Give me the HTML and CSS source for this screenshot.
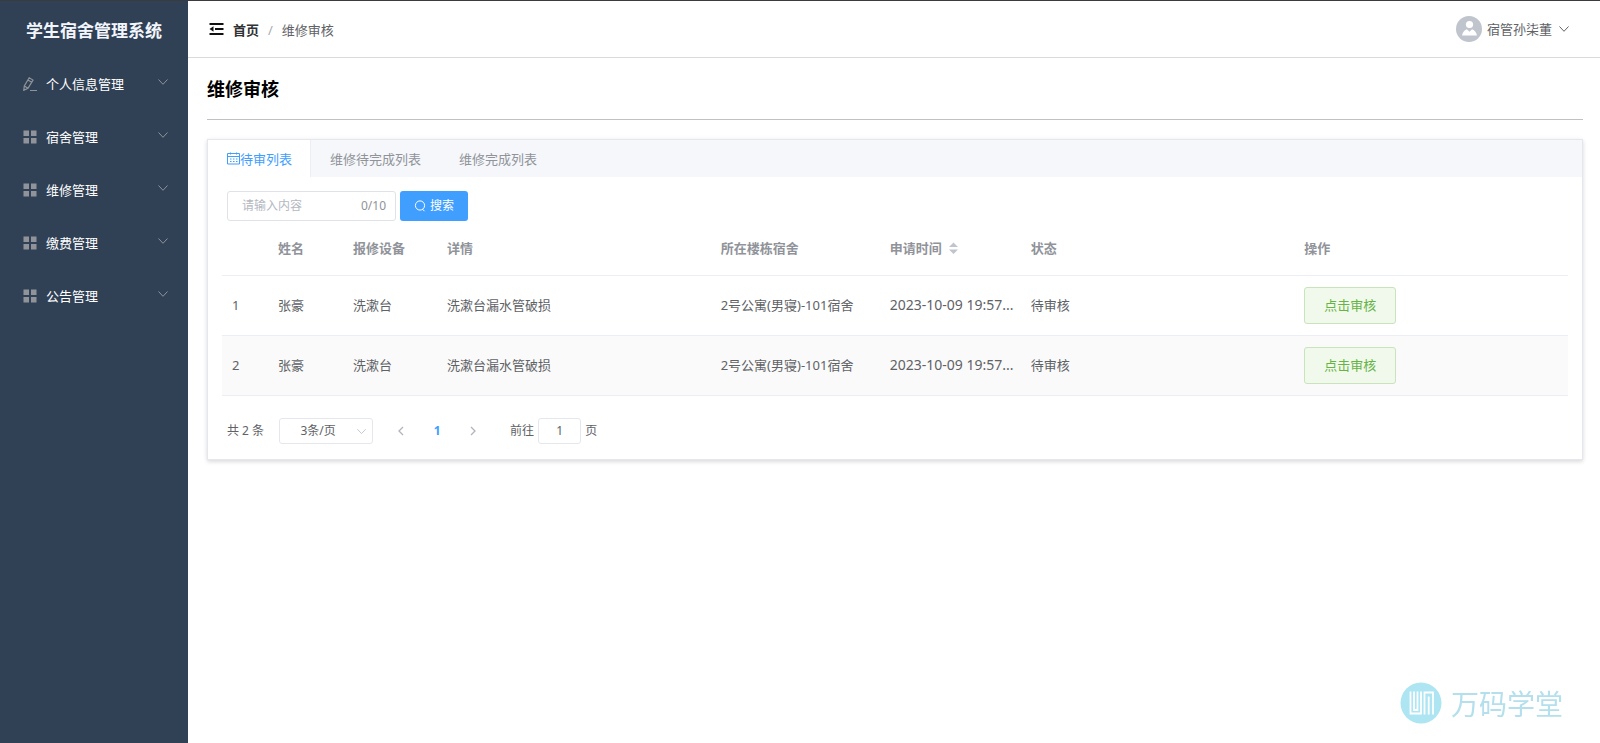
FILE: index.html
```html
<!DOCTYPE html>
<html lang="zh-CN">
<head>
<meta charset="utf-8">
<meta name="viewport" content="width=device-width, initial-scale=1">
<title>学生宿舍管理系统</title>
<link rel="stylesheet" href="styles.css">
</head>
<body>
<svg class="sprite" aria-hidden="true">
  <symbol id="down" viewBox="0 0 12 12"><path d="M1.5 3.5 6 8.3l4.500-4.800" fill="none" stroke="currentColor"/></symbol>
  <symbol id="grid" viewBox="0 0 14 14"><path d="M.5.500h5.500V6H.5zM8 .500h5.500V6H8zM.5 8h5.500v5.500H.5zM8 8h5.500v5.500H8z" fill="currentColor"/></symbol>
</svg>
<div class="app">
  <aside class="sidebar">
    <h1 class="brand">学生宿舍管理系统</h1>
    <nav class="menu">
      <button class="menu-item" type="button"><svg class="menu-icon" viewBox="0 0 14 14"><path d="M.8 13.300 1.300 9 6.200.800l3.800 2.300-5 8.200zM4.900 3l3.800 2.300M1.300 9 5 11.300M7 13.500h7" fill="none" stroke="currentColor" stroke-width="1.200"/></svg><span>个人信息管理</span><svg class="menu-arrow"><use href="#down"/></svg></button>
      <button class="menu-item" type="button"><svg class="menu-icon"><use href="#grid"/></svg><span>宿舍管理</span><svg class="menu-arrow"><use href="#down"/></svg></button>
      <button class="menu-item" type="button"><svg class="menu-icon"><use href="#grid"/></svg><span>维修管理</span><svg class="menu-arrow"><use href="#down"/></svg></button>
      <button class="menu-item" type="button"><svg class="menu-icon"><use href="#grid"/></svg><span>缴费管理</span><svg class="menu-arrow"><use href="#down"/></svg></button>
      <button class="menu-item" type="button"><svg class="menu-icon"><use href="#grid"/></svg><span>公告管理</span><svg class="menu-arrow"><use href="#down"/></svg></button>
    </nav>
  </aside>
  <div class="page">
    <header class="topbar">
      <button class="fold" type="button" aria-label="折叠菜单"><svg class="fold-icon" viewBox="0 0 15 12"><path d="M.5 1h14M6 6h8.500M.5 11h14" fill="none" stroke="currentColor" stroke-width="2"/><path d="M4.500 3.300v5.400L.5 6z" fill="currentColor"/></svg></button>
      <nav class="crumbs" aria-label="面包屑"><a class="crumb-home" href="#">首页</a><span class="crumb-sep">/</span><span>维修审核</span></nav>
      <button class="user" type="button"><svg class="avatar" viewBox="0 0 26 26"><circle cx="13" cy="13" r="13" fill="#c0c4cc"/><circle cx="13.500" cy="8.500" r="3.600" fill="#fff"/><path d="M6 19.500c.5-3 2-5.300 4.800-6.300l2.700 2.500 2.600-2.500c2.700 1 4.400 3.300 4.900 6.300z" fill="#fff"/></svg><span>宿管孙柒董</span><svg class="user-arrow"><use href="#down"/></svg></button>
    </header>
    <main class="content">
      <h2 class="title">维修审核</h2>
      <section class="card">
        <div class="tabs" role="tablist">
          <button class="tab tab-active" type="button" role="tab" aria-selected="true"><svg class="tab-icon" viewBox="0 0 13 13"><path d="M.5 1.500h12v10.500H.5zM.5 4.500h12M3.500.500v2M9.500.500v2" fill="none" stroke="currentColor"/><path d="M3 7h7.500M3 9.500h7.500" fill="none" stroke="currentColor" stroke-dasharray="1.500 1.500"/></svg>待审列表</button>
          <button class="tab" type="button" role="tab">维修待完成列表</button>
          <button class="tab" type="button" role="tab">维修完成列表</button>
        </div>
        <div class="panel">
          <form class="search">
            <label class="field"><input class="field-input" type="text" maxlength="10" placeholder="请输入内容" aria-label="搜索内容"><span class="field-count">0/10</span></label>
            <button class="search-btn" type="button"><svg class="search-icon" viewBox="0 0 12 12"><circle cx="6" cy="5.500" r="4.600" fill="none" stroke="currentColor"/><path d="M8.500 9.200l2 2" fill="none" stroke="currentColor"/></svg>搜索</button>
          </form>
          <table class="table">
            <colgroup><col class="c-index"><col class="c-name"><col class="c-device"><col class="c-wide"><col class="c-room"><col class="c-time"><col class="c-wide"><col class="c-wide"></colgroup>
            <thead><tr><th></th><th>姓名</th><th>报修设备</th><th>详情</th><th>所在楼栋宿舍</th><th><span class="sort">申请时间<svg class="sort-icon" viewBox="0 0 9 12"><path d="M0 5 4.500.500 9 5zM0 7.500h9L4.500 12z" fill="#c0c4cc"/></svg></span></th><th>状态</th><th>操作</th></tr></thead>
            <tbody>
              <tr><td>1</td><td>张豪</td><td>洗漱台</td><td>洗漱台漏水管破损</td><td>2号公寓(男寝)-101宿舍</td><td class="time">2023-10-09 19:57...</td><td>待审核</td><td><button class="review" type="button">点击审核</button></td></tr>
              <tr><td>2</td><td>张豪</td><td>洗漱台</td><td>洗漱台漏水管破损</td><td>2号公寓(男寝)-101宿舍</td><td class="time">2023-10-09 19:57...</td><td>待审核</td><td><button class="review" type="button">点击审核</button></td></tr>
            </tbody>
          </table>
          <nav class="pager" aria-label="分页">
            <span>共 2 条</span>
            <span class="size"><select class="size-select" aria-label="每页条数"><option>3条/页</option></select><svg class="size-arrow"><use href="#down"/></svg></span>
            <span class="pages">
              <button class="page-btn" type="button" aria-label="上一页"><svg class="page-icon" viewBox="0 0 12 12"><path d="M8 2 4 6l4 4" fill="none" stroke="currentColor" stroke-width="1.300"/></svg></button>
              <button class="page-btn page-current" type="button">1</button>
              <button class="page-btn" type="button" aria-label="下一页"><svg class="page-icon" viewBox="0 0 12 12"><path d="M4 2l4 4-4 4" fill="none" stroke="currentColor" stroke-width="1.300"/></svg></button>
            </span>
            <label class="jump">前往<input class="jump-input" type="text" value="1">页</label>
          </nav>
        </div>
      </section>
    </main>
  </div>
</div>
<div class="mark">
  <svg class="mark-logo" viewBox="0 0 42 42"><circle cx="21" cy="21" r="20.500" fill="#aee5f2"/><path d="M10.500 9.500v22h10.500v-22M14 9.500v18.500h3.500V9.500M24.500 32.500v-22h8.500v22M28.700 14.500v18" fill="none" stroke="#fff" stroke-width="1.800"/></svg>
  <span>万码学堂</span>
</div>
</body>
</html>
```
FILE: styles.css
```css
* { box-sizing: border-box; }
body {
  margin: 0;
  font: 13px/20px "Noto Sans", "Noto Sans CJK SC", sans-serif;
  color: #606266;
  background: #fff;
}
button, input, select { font: inherit; color: inherit; }
button { border: 0; padding: 0; background: none; cursor: pointer; }
a { color: inherit; text-decoration: none; }
svg { display: block; flex: none; }
.sprite { position: absolute; width: 0; height: 0; }

.app { display: flex; min-height: 100vh; border-top: 1px solid #3b3b3f; }
.sidebar { flex: none; width: 188px; background: #304156; }
.brand {
  margin: 0;
  padding: 15px 0 11px;
  font-size: 17px;
  line-height: 30px;
  text-align: center;
  color: #f2f6fc;
}
.menu { display: flex; flex-direction: column; }
.menu-item {
  display: flex;
  align-items: center;
  height: 53px;
  padding: 0 19px 0 23px;
  color: #fff;
}
.menu-icon { width: 14px; height: 14px; margin-right: 9px; color: #909399; }
.menu-arrow { width: 12px; height: 12px; margin: 0 0 4px auto; color: #909399; }

.page { flex: 1; min-width: 0; }
.topbar {
  display: flex;
  align-items: center;
  height: 57px;
  padding: 0 30px 0 21px;
  border-bottom: 1px solid #d8dadd;
}
.fold { margin-right: 9px; color: #111; }
.fold-icon { width: 15px; height: 12px; }
.crumbs { display: flex; padding-top: 2px; }
.crumb-home { font-weight: 700; color: #303133; }
.crumb-sep { margin: 0 9px; color: #a8abb2; }
.user { display: flex; align-items: center; margin-left: auto; }
.avatar { width: 26px; height: 26px; margin-right: 5px; }
.user-arrow { width: 12px; height: 12px; margin-left: 6px; }

.content { padding: 0 17px 24px 19px; }
.title {
  margin: 0 0 19px;
  padding: 16px 0 15px;
  border-bottom: 1px solid #bfc1c4;
  font-size: 18px;
  line-height: 30px;
  color: #000;
}
.card {
  border: 1px solid #e4e7ed;
  box-shadow: 0 2px 4px rgba(0, 0, 0, .12), 0 0 6px rgba(0, 0, 0, .04);
}
.tabs { display: flex; background: #f5f7fa; }
.tab {
  display: flex;
  align-items: center;
  height: 37px;
  padding: 0 19px;
  color: #909399;
}
.tab-active { padding: 0 18px 0 19px; border-right: 1px solid #ebeef3; background: #fff; color: #409eff; }
.tab-icon { width: 13px; height: 13px; }
.panel { padding: 14px; }

.search { display: flex; gap: 4px; padding-left: 5px; font-size: 12px; }
.field {
  display: flex;
  align-items: center;
  width: 169px;
  height: 30px;
  padding: 0 9px 0 14px;
  border: 1px solid #dfe2e8;
  border-radius: 3px;
  color: #909399;
}
.field-input { flex: 1; min-width: 0; padding: 0; border: 0; outline: 0; background: none; }
.field-input::placeholder { color: #b4b8bf; }
.search-btn {
  display: flex;
  align-items: center;
  justify-content: center;
  gap: 4px;
  width: 68px;
  border-radius: 3px;
  background: #409eff;
  color: #fff;
}
.search-icon { width: 12px; height: 12px; }

.table { width: 100%; table-layout: fixed; border-collapse: collapse; }
.c-index { width: 46px; }
.c-name { width: 75px; }
.c-device { width: 94px; }
.c-room { width: 169px; }
.c-time { width: 141px; }
.table th, .table td {
  height: 60px;
  padding: 0 0 0 10px;
  border-bottom: 1px solid #ebeef5;
  text-align: left;
  white-space: nowrap;
}
.table th { height: 54px; color: #909399; }
.table tbody tr:nth-child(even) { background: #fafafa; }
.table .time { font-size: 14px; }
.sort { display: flex; align-items: center; gap: 7px; }
.sort-icon { width: 9px; height: 12px; }
.review {
  display: block;
  width: 92px;
  height: 37px;
  border: 1px solid #c9e4bb;
  border-radius: 3px;
  background: #f0f9eb;
  color: #67b346;
}

.pager { display: flex; align-items: center; padding: 22px 5px 1px; font-size: 12px; }
.size { position: relative; margin-left: 15px; }
.size-select {
  display: block;
  width: 94px;
  height: 26px;
  padding: 0 16px 0 0;
  border: 1px solid #e4e7ed;
  border-radius: 3px;
  background: #fff;
  appearance: none;
  text-align-last: center;
}
.size-arrow { position: absolute; top: 8px; right: 6px; width: 11px; height: 11px; color: #c0c4cc; pointer-events: none; }
.pages { display: flex; margin: 0 19px 0 10px; }
.page-btn { display: flex; align-items: center; justify-content: center; width: 36px; height: 26px; color: #b0b4bc; }
.page-icon { width: 12px; height: 12px; }
.page-current { font-weight: 700; color: #409eff; }
.jump { display: flex; align-items: center; gap: 4px; }
.jump-input {
  width: 43px;
  height: 26px;
  padding: 0;
  border: 1px solid #e4e7ed;
  border-radius: 3px;
  text-align: center;
}

.mark {
  position: fixed;
  right: 37px;
  bottom: 19px;
  display: flex;
  align-items: center;
  gap: 9px;
  font-family: "Noto Sans CJK SC", sans-serif;
  font-size: 28px;
  font-weight: 400;
  line-height: 38px;
  color: #b4dfec;
}
.mark-logo { width: 42px; height: 42px; }
```
